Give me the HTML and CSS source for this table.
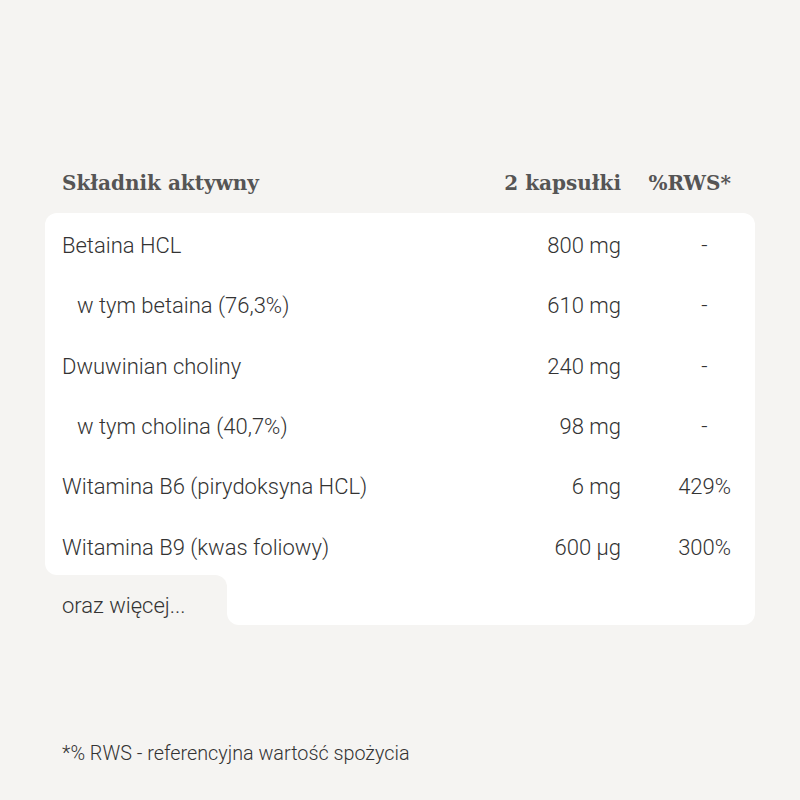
FILE: index.html
```html
<!DOCTYPE html>
<html lang="pl">
<head>
<meta charset="utf-8">
<title>Skład</title>
<link rel="stylesheet" href="styles.css">
</head>
<body>
<main class="page">
  <div class="head">
    <div class="c1">Składnik aktywny</div>
    <div class="c2">2 kapsułki</div>
    <div class="c3">%RWS*</div>
  </div>
  <div class="card">
    <div class="row"><div class="c1">Betaina HCL</div><div class="c2">800 mg</div><div class="c3"><span class="dash">-</span></div></div>
    <div class="row"><div class="c1 sub">w tym betaina (76,3%)</div><div class="c2">610 mg</div><div class="c3"><span class="dash">-</span></div></div>
    <div class="row"><div class="c1">Dwuwinian choliny</div><div class="c2">240 mg</div><div class="c3"><span class="dash">-</span></div></div>
    <div class="row"><div class="c1 sub">w tym cholina (40,7%)</div><div class="c2">98 mg</div><div class="c3"><span class="dash">-</span></div></div>
    <div class="row"><div class="c1">Witamina B6 (pirydoksyna HCL)</div><div class="c2">6 mg</div><div class="c3">429%</div></div>
    <div class="row"><div class="c1">Witamina B9 (kwas foliowy)</div><div class="c2">600 µg</div><div class="c3">300%</div></div>
  </div>
  <div class="more-row">
    <div class="more-wrap"><div class="more">oraz więcej...</div></div>
    <div class="more-fill"></div>
  </div>
  <p class="note">*% RWS - referencyjna wartość spożycia</p>
</main>
</body>
</html>
```
FILE: styles.css
```css
html, body {
  margin: 0;
  padding: 0;
  background: #f5f4f2;
}
body {
  font-family: Roboto, "Liberation Sans", sans-serif;
  font-weight: 300;
  font-size: 22px;
  color: #333;
}
.page {
  width: 710px;
  margin-left: 45px;
  padding-top: 168px;
}
.head, .row {
  display: grid;
  grid-template-columns: 1fr 150px 110px;
  padding: 0 24px 0 17px;
  line-height: 30px;
}
.head {
  font-family: "DejaVu Serif", serif;
  font-weight: 700;
  color: #555;
  font-size: 20px;
  padding-bottom: 15px;
}
.c2, .c3 { text-align: right; }
.sub { padding-left: 15px; }
.dash {
  display: inline-block;
  width: 53px;
  text-align: center;
}
.card {
  background: #fff;
  border-radius: 12px 12px 0 12px;
}
.row {
  padding-top: 18px;
  padding-bottom: 12.33px;
}
.more-row {
  display: flex;
  height: 50px;
}
.more-wrap {
  width: 182px;
  background: #fff;
}
.more {
  height: 100%;
  box-sizing: border-box;
  background: #f5f4f2;
  border-top-right-radius: 12px;
  padding: 16px 0 0 17px;
  line-height: 30px;
}
.more-fill {
  flex: 1;
  background: #fff;
  border-radius: 0 0 12px 12px;
}
.note {
  margin: 114px 0 0 17px;
  line-height: 30px;
  font-size: 19.8px;
}
```
